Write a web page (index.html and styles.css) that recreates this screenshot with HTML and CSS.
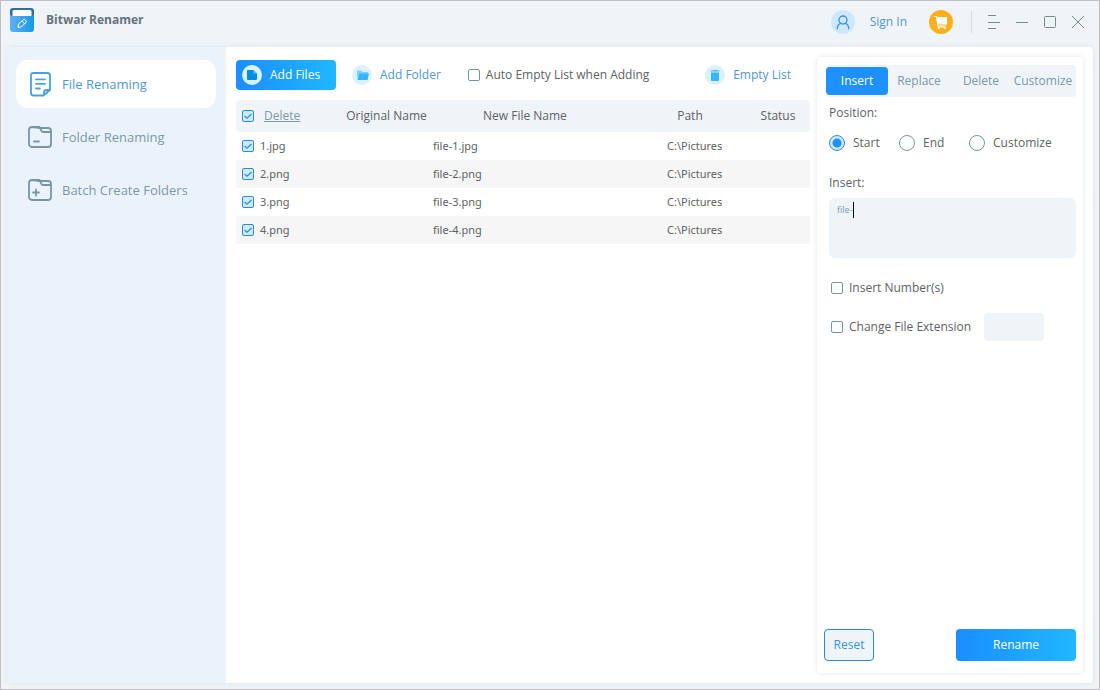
FILE: index.html
```html
<!DOCTYPE html>
<html lang="en">
<head>
<meta charset="UTF-8" />
<title>Bitwar Renamer</title>
<link rel="stylesheet" href="styles.css">
</head>
<body>

<div class="window">
  <header class="titlebar">
    <div class="brand">
      <svg width="24" height="24" viewBox="0 0 24 24">
        <defs>
          <linearGradient id="logoBody" x1="0" y1="0" x2="1" y2="0">
            <stop offset="0" stop-color="#62b0f5" />
            <stop offset="1" stop-color="#159ae0" />
          </linearGradient>
        </defs>
        <path d="M0 10V3a3 3 0 0 1 3-3h18a3 3 0 0 1 3 3v7z" fill="#326f9f" />
        <path d="M2.500 9V3.500a1.500 1.500 0 0 1 1.500-1.500h16a1.500 1.500 0 0 1 1.500 1.500V9z" fill="#fff" />
        <path d="M0 7l2 1h20l2-1v14a3 3 0 0 1-3 3H3a3 3 0 0 1-3-3z" fill="url(#logoBody)" />
        <path d="M8 19.500l.5-3.500 5-4.300a1.200 1.200 0 0 1 1.700.1l.9 1a1.200 1.200 0 0 1-.1 1.700l-4.700 4.300zM12 13.200l2.500 2.600" fill="none" stroke="#fff" stroke-width="1" stroke-linejoin="round" />
      </svg>
      <h1>Bitwar Renamer</h1>
    </div>
    <div class="account">
      <svg width="24" height="24" viewBox="0 0 24 24">
        <circle cx="12" cy="12" r="12" fill="#cfe7fd" />
        <circle cx="12" cy="10" r="4" fill="none" stroke="#3b92e0" stroke-width="1.300" />
        <path d="M6.300 18.700c0-3.200 1.900-5 3.800-5.600M17.700 18.700c0-3.200-1.900-5-3.800-5.600" fill="none" stroke="#3b92e0" stroke-width="1.300" stroke-linecap="round" />
      </svg>
      <a href="#">Sign In</a>
    </div>
    <button type="button" class="icon-btn cart" aria-label="Shop">
      <svg width="24" height="24" viewBox="0 0 24 24">
        <circle cx="12" cy="12" r="12" fill="#fdae1c" />
        <path d="M5 6.500h2.500l1.500 9.500h8" fill="none" stroke="#fff" stroke-width="1.200" />
        <path d="M7.500 7h10.500v7.500H8.700z" fill="#fff" />
        <path d="M8.500 17h8.500" stroke="#fff" stroke-width="1" />
        <circle cx="9.800" cy="18.200" r="1" fill="#fff" /><circle cx="15.800" cy="18.200" r="1" fill="#fff" />
      </svg>
    </button>
    <div class="controls">
      <button type="button" class="icon-btn" aria-label="Menu">
        <svg width="14" height="14" viewBox="0 0 14 14"><path d="M1 .5h8M1 7.500h12M1 13.500h8" /></svg>
      </button>
      <button type="button" class="icon-btn" aria-label="Minimize">
        <svg width="14" height="14" viewBox="0 0 14 14"><path d="M1 7.500h12" /></svg>
      </button>
      <button type="button" class="icon-btn" aria-label="Maximize">
        <svg width="14" height="14" viewBox="0 0 14 14"><rect x="1.500" y="1.500" width="11" height="11" rx="1" /></svg>
      </button>
      <button type="button" class="icon-btn" aria-label="Close">
        <svg width="14" height="14" viewBox="0 0 14 14"><path d="M1 1l12 12M13 1L1 13" /></svg>
      </button>
    </div>
  </header>

  <div class="content">
    <nav class="sidebar">
      <a href="#" class="nav-item active">
        <svg width="24" height="26" viewBox="0 0 24 26">
          <path d="M15.500 24.500H5.500A2.500 2.500 0 0 1 3 22V4.500A2.500 2.500 0 0 1 5.500 2h14A2.500 2.500 0 0 1 22 4.500V19zM16 24v-2.500a2.500 2.500 0 0 1 2.500-2.500h3" />
          <path d="M8 8.300h9M8 12.800h9M8 17.500h4" />
        </svg>
        File Renaming
      </a>
      <a href="#" class="nav-item">
        <svg width="24" height="26" viewBox="0 0 24 26">
          <path d="M4 3h7.500l2 4c.3.600.8 1 1.500 1h8M12 4h8a3 3 0 0 1 3 3v13a3 3 0 0 1-3 3H4a3 3 0 0 1-3-3V6a3 3 0 0 1 3-3z" />
          <path d="M6 17.500h5" />
        </svg>
        Folder Renaming
      </a>
      <a href="#" class="nav-item">
        <svg width="24" height="26" viewBox="0 0 24 26">
          <path d="M4 3h7.500l2 4c.3.600.8 1 1.500 1h8M12 4h8a3 3 0 0 1 3 3v13a3 3 0 0 1-3 3H4a3 3 0 0 1-3-3V6a3 3 0 0 1 3-3z" />
          <path d="M5 15.500h6M8 12.500v6" />
        </svg>
        Batch Create Folders
      </a>
    </nav>

    <main class="files">
      <div class="toolbar">
        <button type="button" class="btn primary add-files">
          <svg width="20" height="20" viewBox="0 0 20 20">
            <circle cx="10" cy="10" r="10" fill="#d9f1fe" />
            <path d="M5 6a1 1 0 0 1 1-1h5.500L15 8.500V14a1 1 0 0 1-1 1H6a1 1 0 0 1-1-1z" fill="#078ddd" />
            <path d="M11.500 5v3.500H15z" fill="#6cc3f3" />
          </svg>
          Add Files
        </button>
        <button type="button" class="link-btn">
          <svg width="20" height="20" viewBox="0 0 20 20">
            <circle cx="10" cy="10" r="10" fill="#dbf1ff" />
            <path d="M5 5.500h4l1.500 1.500H16v2H7l-2 5z" fill="#81d0fb" />
            <path d="M7 8.500h10L15.500 15H5.500z" fill="#35b5fa" />
          </svg>
          Add Folder
        </button>
        <label class="check auto-empty"><input type="checkbox"> Auto Empty List when Adding</label>
        <button type="button" class="link-btn empty-list">
          <svg width="20" height="20" viewBox="0 0 20 20">
            <circle cx="10" cy="10" r="10" fill="#dbf1ff" />
            <path d="M6 7.500h8V15a1 1 0 0 1-1 1H7a1 1 0 0 1-1-1zM5.500 5.500h3V5h3v.5h3v1h-9z" fill="#35b5fa" />
          </svg>
          Empty List
        </button>
      </div>

      <table class="file-table">
        <colgroup>
          <col class="col-check"><col class="col-delete"><col class="col-name">
          <col><col class="col-path"><col class="col-status">
        </colgroup>
        <thead>
          <tr>
            <th><input type="checkbox" aria-label="Select all" checked></th>
            <th class="left"><a href="#">Delete</a></th>
            <th>Original Name</th>
            <th class="new-name">New File Name</th>
            <th>Path</th>
            <th>Status</th>
          </tr>
        </thead>
        <tbody>
          <tr>
            <td><input type="checkbox" id="f1" checked></td>
            <td colspan="2"><label for="f1">1.jpg</label></td>
            <td>file-1.jpg</td><td class="path">C:\Pictures</td><td></td>
          </tr>
          <tr>
            <td><input type="checkbox" id="f2" checked></td>
            <td colspan="2"><label for="f2">2.png</label></td>
            <td>file-2.png</td><td class="path">C:\Pictures</td><td></td>
          </tr>
          <tr>
            <td><input type="checkbox" id="f3" checked></td>
            <td colspan="2"><label for="f3">3.png</label></td>
            <td>file-3.png</td><td class="path">C:\Pictures</td><td></td>
          </tr>
          <tr>
            <td><input type="checkbox" id="f4" checked></td>
            <td colspan="2"><label for="f4">4.png</label></td>
            <td>file-4.png</td><td class="path">C:\Pictures</td><td></td>
          </tr>
        </tbody>
      </table>
    </main>

    <aside class="panel">
      <div class="tabs">
        <button type="button" class="tab active">Insert</button>
        <button type="button" class="tab">Replace</button>
        <button type="button" class="tab">Delete</button>
        <button type="button" class="tab">Customize</button>
      </div>

      <form class="options" onsubmit="return false;">
        <p>Position:</p>
        <div class="radios">
          <label><input type="radio" name="position" checked> Start</label>
          <label><input type="radio" name="position"> End</label>
          <label><input type="radio" name="position"> Customize</label>
        </div>

        <label class="field-label" for="insert">Insert:</label>
        <div class="insert-box">
          <textarea id="insert">file-</textarea>
          <span class="caret"></span>
        </div>

        <div class="option-row">
          <label class="check"><input type="checkbox"> Insert Number(s)</label>
        </div>
        <div class="option-row">
          <label class="check"><input type="checkbox"> Change File Extension</label>
          <input type="text" class="extension" aria-label="File extension">
        </div>
      </form>

      <div class="actions">
        <button type="button" class="btn reset">Reset</button>
        <button type="button" class="btn primary rename">Rename</button>
      </div>
    </aside>
  </div>
</div>

</body>
</html>
```
FILE: styles.css
```css
* {
  box-sizing: border-box;
}

body {
  margin: 0;
  font-family: "Open Sans", "Noto Sans", sans-serif;
  font-size: 12px;
  line-height: 16px;
  color: #606266;
}

button,
input,
textarea {
  font: inherit;
  color: inherit;
  margin: 0;
}

button {
  border: none;
  background: none;
  padding: 0;
  cursor: pointer;
}

a {
  color: inherit;
  text-decoration: none;
}

svg {
  display: block;
  flex: none;
}

.window {
  display: flex;
  flex-direction: column;
  min-height: 100vh;
  border: 1px solid #bfc0c4;
  background-color: #eff4f8;
  padding: 0 6px 6px;
}

/* title bar */
.titlebar {
  display: flex;
  align-items: center;
  height: 46px;
  padding: 0 8px 4px 3px;
}

.brand {
  display: flex;
  align-items: center;
  gap: 12px;
  margin-right: auto;
  padding-bottom: 4px;
}

h1 {
  margin: 0;
  font-size: 12px;
  line-height: 20px;
  font-weight: bold;
  color: #66727c;
}

.account {
  display: flex;
  align-items: center;
  gap: 15px;
  color: #4f97d6;
}

.cart {
  margin: 0 18px 0 22px;
}

.controls {
  display: flex;
  align-items: center;
  gap: 14px;
  height: 22px;
  padding-left: 15px;
  border-left: 1px solid #d6dbe0;
}

.controls svg {
  fill: none;
  stroke: #7f868c;
  stroke-width: 1;
}

/* body */
.content {
  display: flex;
  flex: 1;
  background-color: #fff;
  border-radius: 4px;
  box-shadow: 0 0 5px rgba(120, 140, 150, 0.15);
}

.sidebar {
  display: flex;
  flex-direction: column;
  gap: 5px;
  width: 219px;
  flex: none;
  padding: 13px 10px 13px 9px;
  background-color: #eaf3fb;
}

.nav-item {
  display: flex;
  align-items: center;
  gap: 10px;
  height: 48px;
  padding: 0 12px;
  border-radius: 12px;
  font-size: 13px;
  color: #7d98a8;
}

.nav-item svg {
  fill: none;
  stroke: #7895a6;
  stroke-width: 1.800;
  stroke-linecap: round;
  stroke-linejoin: round;
}

.nav-item.active {
  background-color: #fff;
  color: #4f97d6;
}

.nav-item.active svg {
  stroke: #4a9fe6;
}

.files {
  flex: 1;
  min-width: 0;
  padding: 13px 7px 13px 10px;
}

.toolbar {
  display: flex;
  align-items: center;
  margin-bottom: 10px;
}

.btn {
  height: 32px;
  border-radius: 4px;
}

.primary {
  background: linear-gradient(to right, #1b8eff, #20b7ff);
  color: #fff;
}

.add-files {
  display: flex;
  align-items: center;
  gap: 8px;
  width: 100px;
  height: 30px;
  padding-left: 6px;
  margin-right: 16px;
}

.link-btn {
  display: flex;
  align-items: center;
  gap: 8px;
  color: #4f97d6;
}

.check {
  display: flex;
  align-items: center;
  gap: 6px;
}

.auto-empty {
  margin-left: 27px;
}

.empty-list {
  margin-left: auto;
  margin-right: 19px;
}

input[type="checkbox"] {
  appearance: none;
  display: block;
  width: 12px;
  height: 12px;
  border: 1px solid #7895a6;
  border-radius: 2px;
  background-color: #fff;
}

input[type="checkbox"]:checked {
  border-color: #2b8ae0;
  background: #cfe9ff url("data:image/svg+xml,%3Csvg xmlns='http://www.w3.org/2000/svg' viewBox='0 0 10 10'%3E%3Cpath d='M1.500 5l2.500 2.300L8.500 3' fill='none' stroke='%232b8ae0' stroke-width='1.200'/%3E%3C/svg%3E");
}

/* file list */
.file-table {
  width: 100%;
  table-layout: fixed;
  border-collapse: separate;
  border-spacing: 0;
}

.col-check { width: 24px; }
.col-delete { width: 80px; }
.col-name { width: 93px; }
.col-path { width: 112px; }
.col-status { width: 64px; }

.file-table th {
  height: 32px;
  padding: 0;
  font-weight: normal;
  background-color: #eff4f9;
}

.file-table th:first-child {
  border-radius: 4px 0 0 4px;
}

.file-table th:last-child {
  border-radius: 0 4px 4px 0;
}

.file-table th.left {
  text-align: left;
  padding-left: 4px;
}

.file-table th.left a {
  color: #7d98a8;
  text-decoration: underline;
}

.file-table th.new-name {
  text-align: left;
  padding-left: 50px;
}

.file-table td {
  height: 28px;
  padding: 0;
  font-family: "Noto Sans", sans-serif;
  font-size: 11px;
}

.file-table td.path {
  padding-left: 33px;
}

.file-table tbody tr:nth-child(even) {
  background-color: #f6f6f6;
}

.file-table input {
  margin-left: 6px;
}

/* settings panel */
.panel {
  display: flex;
  flex-direction: column;
  width: 266px;
  flex: none;
  margin: 10px 10px 10px 0;
  padding: 8px 7px 12px;
  border-radius: 4px;
  background-color: #fff;
  box-shadow: 0 0 5px rgba(90, 130, 170, 0.2);
}

.tabs {
  display: flex;
  height: 32px;
  padding: 2px 0;
  margin-left: 2px;
  border-radius: 4px;
  background-color: #eff4f9;
}

.tab {
  width: 62px;
  height: 28px;
  flex: none;
  border-radius: 4px;
  color: #7d98a8;
}

.tab.active {
  background-color: #1e90ff;
  color: #fff;
}

.options {
  padding-left: 5px;
}

.options p {
  margin: 8px 0 14px;
}

.radios {
  display: flex;
  margin-bottom: 24px;
}

.radios label {
  display: flex;
  align-items: center;
  gap: 8px;
  min-width: 70px;
}

input[type="radio"] {
  appearance: none;
  width: 16px;
  height: 16px;
  border: 1px solid #7895a6;
  border-radius: 50%;
}

input[type="radio"]:checked {
  border-color: #2b8ae0;
  background: radial-gradient(circle, #1e90ff 4px, #cfe9ff 5px);
}

.field-label {
  display: block;
  margin-bottom: 7px;
}

.insert-box {
  position: relative;
  margin-bottom: 16px;
}

textarea {
  display: block;
  width: 100%;
  height: 60px;
  padding: 4px 8px;
  border: none;
  border-radius: 6px;
  resize: none;
  outline: none;
  background-color: #eff4f9;
  color: #7d98a8;
  font-size: 9px;
}

.caret {
  position: absolute;
  left: 24px;
  top: 4px;
  width: 1px;
  height: 16px;
  background-color: #000;
}

.option-row {
  display: flex;
  align-items: center;
  gap: 13px;
  height: 28px;
  margin-bottom: 11px;
  padding-left: 2px;
}

.extension {
  width: 60px;
  height: 28px;
  border: none;
  border-radius: 4px;
  background-color: #eff4f9;
}

.actions {
  display: flex;
  justify-content: space-between;
  margin-top: auto;
}

.reset {
  width: 50px;
  border: 1px solid #2b8ae0;
  background-color: #eff4f9;
  color: #3b92e0;
}

.rename {
  width: 120px;
}
```
